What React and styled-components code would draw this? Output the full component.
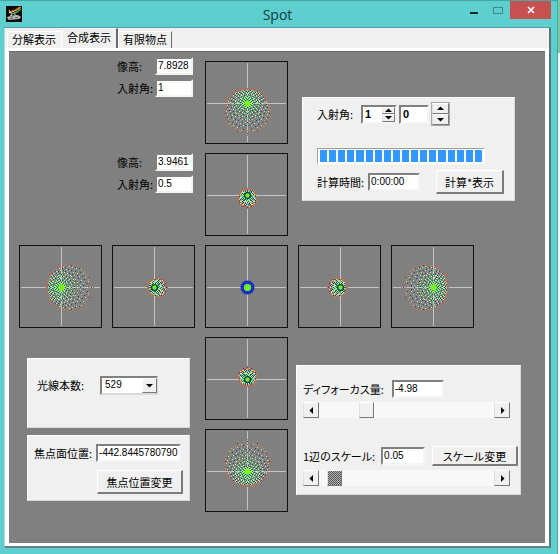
import { useState } from "react";
import styled, { createGlobalStyle } from "styled-components";

const SPOT_SIZE = 83;
const CENTER = 42;
const PUPIL = 13;
const DIRECTIONS = {
  down: (along, across) => [across, along],
  up: (along, across) => [across, -along],
  right: (along, across) => [along, across],
  left: (along, across) => [-along, across],
};
const INNER_COLORS = ["#4cf070", "#2c5c60", "#c8f0a0"];
const OUTER_COLORS = ["#e8d8a8", "#303c88", "#58cc78"];

// square grid of rays over a round pupil, traced through a defocus + coma model
const traceRays = (defocus, coma, direction) => {
  const pixels = new Map();
  const turn = DIRECTIONS[direction];
  const plot = (r, t, scale, color) => {
    const a = defocus * scale * Math.pow(r, 1.5);
    const c = coma * Math.pow(r, 3);
    const along = a * Math.cos(t) + c * (2 + Math.cos(2 * t));
    const across = a * Math.sin(t) + c * Math.sin(2 * t);
    const [x, y] = turn(along, across);
    pixels.set(`${Math.round(x + CENTER)},${Math.round(y + CENTER)}`, color);
  };

  for (let u = -PUPIL; u <= PUPIL; u++) {
    for (let v = -PUPIL; v <= PUPIL; v++) {
      const r = Math.hypot(u, v) / PUPIL;
      if (r > 1) continue;
      const t = Math.atan2(v, u);
      const index = (Math.abs(u) + 2 * Math.abs(v)) % 3;
      plot(r, t, 1, r < 0.72 ? INNER_COLORS[index] : OUTER_COLORS[index]);
      if (r > 0.9) plot(r, t, 1.07, "#d06444");
    }
  }
  return [...pixels].map(([key, color]) => {
    const [x, y] = key.split(",").map(Number);
    return { key, x, y, color };
  });
};

const Spot = ({ kind, direction = "down", col, row }) => {
  const rays =
    kind === "large" ? traceRays(22, 2.8, direction) :
    kind === "small" ? traceRays(9, 1, direction) : [];

  return (
    <SpotBox $col={col} $row={row} viewBox={`0 0 ${SPOT_SIZE} ${SPOT_SIZE}`} aria-hidden="true">
      <rect x="0.5" y="0.5" width="82" height="82" fill="#808080" stroke="#101010" />
      <path d="M2 42.5H81M42.5 2V81" stroke="#c4c4c4" />
      <g shapeRendering="crispEdges">
        {rays.map((p) => (
          <rect key={p.key} x={p.x} y={p.y} width="1" height="1" fill={p.color} />
        ))}
      </g>
      {kind === "large" && <circle cx="42.5" cy="42.5" r="3" fill="#7cf810" />}
      {kind === "small" && <circle cx="42.5" cy="42.5" r="2.9" fill="#74f020" stroke="#0c3454" strokeWidth="1.3" />}
      {kind === "axis" && (
        <>
          <circle cx="42.5" cy="42.5" r="5.2" fill="none" stroke="#1428c8" strokeWidth="3.6" />
          <circle cx="42.5" cy="42.5" r="5.4" fill="none" stroke="#4470a0" strokeWidth="1" strokeDasharray="1 2" />
          <circle cx="42.5" cy="42.5" r="3.6" fill="#70f020" />
        </>
      )}
    </SpotBox>
  );
};

const Arrow = ({ dir }) => {
  const paths = {
    up: "M1 5H8L4.5 1.5Z",
    down: "M1 2H8L4.5 5.5Z",
    left: "M6 0V7L2.5 3.5Z",
    right: "M3 0V7L6.5 3.5Z",
  };
  return (
    <svg width="9" height="7" viewBox="0 0 9 7" aria-hidden="true">
      <path d={paths[dir]} fill="#000" />
    </svg>
  );
};

const AppIcon = () => (
  <svg width="16" height="16" viewBox="0 0 16 16" aria-hidden="true">
    <rect width="16" height="16" fill="#080808" />
    <path d="M3 6.5C7 6 11 4 14.5 1" stroke="#e8e040" strokeWidth="1.5" fill="none" />
    <path d="M5 5C8 5 11 3 13.5 1" stroke="#e04020" strokeWidth="1.2" fill="none" />
    <path d="M6 8C10 7 13 5 15 3" stroke="#40b060" strokeWidth="1.2" fill="none" />
    <path d="M3 4L6 9L4 10L10 10L8 7" stroke="#d0d0d0" fill="none" />
    <path d="M1 12C2 9 6 12 8 10S13 9 15 11L13 13L3 14Z" fill="#b8bcb8" />
    <path d="M4 12.5L7 12M9 12L12 11.5" stroke="#505850" />
  </svg>
);

const ImageFields = ({ row, height, angle }) => (
  <Fields $row={row}>
    <Label htmlFor={`height-${row}`}>像高:</Label>
    <TextBox id={`height-${row}`} $width={38} defaultValue={height} />
    <Label htmlFor={`angle-${row}`}>入射角:</Label>
    <TextBox id={`angle-${row}`} $width={38} defaultValue={angle} />
  </Fields>
);

const ScrollBar = ({ label, value, checked }) => {
  const [position, setPosition] = useState(value);
  return (
    <Scroll>
      <ArrowButton aria-label={`${label} −`} onClick={() => setPosition(Math.max(0, position - 1))}>
        <Arrow dir="left" />
      </ArrowButton>
      <Range
        type="range"
        aria-label={label}
        value={position}
        onChange={(e) => setPosition(Number(e.target.value))}
        $checked={checked}
      />
      <ArrowButton aria-label={`${label} +`} onClick={() => setPosition(Math.min(100, position + 1))}>
        <Arrow dir="right" />
      </ArrowButton>
    </Scroll>
  );
};

const TABS = ["分解表示", "合成表示", "有限物点"];

const App = () => {
  const [tab, setTab] = useState(1);

  return (
    <Desktop>
      <GlobalStyle />
      <Window>
        <TitleBar>
          <AppIcon />
          <Title>Spot</Title>
          <Controls>
            <Control aria-label="最小化">
              <svg width="8" height="12" viewBox="0 0 8 12"><path d="M0 9H8" stroke="#182c30" strokeWidth="2" /></svg>
            </Control>
            <Control aria-label="最大化" disabled>
              <svg width="10" height="12" viewBox="0 0 10 12"><rect x="0.5" y="3.5" width="9" height="6" fill="none" stroke="#3d8c8a" /></svg>
            </Control>
            <Control aria-label="閉じる" $close>
              <svg width="8" height="8" viewBox="0 0 8 8"><path d="M1 1L7 7M7 1L1 7" stroke="#fff" strokeWidth="1.7" /></svg>
            </Control>
          </Controls>
        </TitleBar>
        <Client>
          <TabList role="tablist">
            {TABS.map((name, i) => (
              <Tab key={name} role="tab" aria-selected={tab === i} $active={tab === i} onClick={() => setTab(i)}>
                {name}
              </Tab>
            ))}
          </TabList>
          <Stage role="tabpanel">
            <ImageFields row={1} height="7.8928" angle="1" />
            <ImageFields row={2} height="3.9461" angle="0.5" />

            <Spot kind="large" direction="down" col={3} row={1} />
            <Spot kind="small" direction="down" col={3} row={2} />
            <Spot kind="large" direction="right" col={1} row={3} />
            <Spot kind="small" direction="right" col={2} row={3} />
            <Spot kind="axis" col={3} row={3} />
            <Spot kind="small" direction="left" col={4} row={3} />
            <Spot kind="large" direction="left" col={5} row={3} />
            <Spot kind="small" direction="up" col={3} row={4} />
            <Spot kind="large" direction="up" col={3} row={5} />

            <CalcPanel>
              <Row $gap={2}>
                <WideLabel htmlFor="incidence">入射角:</WideLabel>
                <SpinBox $width={36}>
                  <BoldInput id="incidence" defaultValue="1" />
                  <Spinner>
                    <ArrowButton aria-label="増やす"><Arrow dir="up" /></ArrowButton>
                    <ArrowButton aria-label="減らす"><Arrow dir="down" /></ArrowButton>
                  </Spinner>
                </SpinBox>
                <SpinBox $width={30}>
                  <BoldInput aria-label="入射角 2" defaultValue="0" />
                </SpinBox>
                <Spinner $large>
                  <ArrowButton aria-label="増やす"><Arrow dir="up" /></ArrowButton>
                  <ArrowButton aria-label="減らす"><Arrow dir="down" /></ArrowButton>
                </Spinner>
              </Row>
              <Progress role="progressbar" aria-label="計算" aria-valuenow={100}>
                {Array.from({ length: 18 }, (_, i) => <Chunk key={i} />)}
              </Progress>
              <Row $gap={4} $top={6}>
                <Label htmlFor="time">計算時間:</Label>
                <TextBox id="time" $width={52} defaultValue="0:00:00" />
                <PushButton $width={68}>計算*表示</PushButton>
              </Row>
            </CalcPanel>

            <LeftPanels>
              <RayPanel>
                <Label htmlFor="rays">光線本数:</Label>
                <Combo>
                  <Select id="rays" defaultValue="529">
                    <option>529</option>
                  </Select>
                  <ComboArrow><Arrow dir="down" /></ComboArrow>
                </Combo>
              </RayPanel>
              <FocusPanel>
                <Row $gap={4}>
                  <Label htmlFor="focus">焦点面位置:</Label>
                  <TextBox id="focus" $width={85} defaultValue="-442.8445780790" />
                </Row>
                <PushButton $width={86}>焦点位置変更</PushButton>
              </FocusPanel>
            </LeftPanels>

            <ScalePanel>
              <Row $gap={8}>
                <Label htmlFor="defocus">ディフォーカス量:</Label>
                <TextBox id="defocus" $width={52} defaultValue="-4.98" />
              </Row>
              <ScrollBar label="ディフォーカス量" value={25} />
              <Row $gap={6} $top={28}>
                <Label htmlFor="scale">1辺のスケール:</Label>
                <TextBox id="scale" $width={44} defaultValue="0.05" />
                <PushButton $width={86} $short>スケール変更</PushButton>
              </Row>
              <ScrollBar label="1辺のスケール" value={5} checked />
            </ScalePanel>
          </Stage>
        </Client>
      </Window>
      <Behind />
    </Desktop>
  );
};

export default App;

const GlobalStyle = createGlobalStyle`
* {
  box-sizing: border-box;
}
body {
  margin: 0;
  color: #000;
  font-family: "Noto Sans CJK JP", sans-serif;
  font-size: 11px;
  line-height: 14px;
}
button, input, select {
  margin: 0;
  padding: 0;
  border: 0;
  border-radius: 0;
  font: inherit;
  color: inherit;
}
svg {
  display: block;
}
`;

const Desktop = styled.div`
display: flex;
min-height: 100vh;
`;

const Behind = styled.div`
width: 2px;
background: linear-gradient(#7cc8a0 53px, #f4f8f8 53px);
`;

const Window = styled.div`
flex: 1;
display: flex;
flex-direction: column;
padding: 0 6px 6px 4px;
background: #5ecfce;
border-top: 1px solid #43a5a5;
border-right: 1px solid #48a8a8;
`;

const TitleBar = styled.header`
display: grid;
grid-template-columns: 1fr auto 1fr;
align-items: start;
height: 27px;
border-bottom: 1px solid #48a5a5;

> svg {
  margin: 5px 0 0 2px;
}
`;

const Title = styled.h1`
margin: 4px 0 0;
color: #123c40;
font-family: "Open Sans", sans-serif;
font-size: 14px;
font-weight: 400;
line-height: 20px;
`;

const Controls = styled.div`
display: flex;
justify-content: flex-end;
`;

const Control = styled.button`
display: flex;
align-items: center;
justify-content: center;
width: ${({ $close }) => ($close ? "41px" : "24px")};
height: 18px;
background: ${({ $close }) => ($close ? "#c75050" : "transparent")};
`;

const Client = styled.main`
flex: 1;
display: flex;
flex-direction: column;
background: #f0f0f0;
border-right: 2px solid #5f7475;
border-bottom: 2px solid #5f8585;
border-left: 1px solid #b8dcdc;
`;

const TabList = styled.div`
display: flex;
align-items: flex-end;
height: 20px;
padding-left: 2px;
`;

const Tab = styled.button`
height: ${({ $active }) => ($active ? "20px" : "17px")};
padding: ${({ $active }) => ($active ? "0 5px 4px" : "0 4px 3px")};
background: #f0f0f0;
border-top: 1px solid #fff;
border-left: 1px solid #fff;
border-right: ${({ $active }) => ($active ? "2px" : "1px")} solid #696969;
white-space: nowrap;

&:first-child {
  border-right-color: #f0f0f0;
}
`;

const Stage = styled.section`
flex: 1;
display: grid;
grid-template-columns: repeat(5, 83px) 1fr;
grid-template-rows: 87px repeat(4, 83px);
gap: 9px 10px;
align-items: end;
align-content: start;
padding: 6px 0 30px 10px;
background: #808080;
border: solid #fff;
border-width: 3px 4px 3px 4px;
box-shadow: inset 0 1px #6c6c6c;
`;

const SpotBox = styled.svg`
grid-column: ${({ $col }) => $col};
grid-row: ${({ $row }) => $row};
width: 83px;
height: 83px;
`;

const Fields = styled.div`
grid-column: 1 / 3;
grid-row: ${({ $row }) => $row};
align-self: start;
justify-self: end;
display: grid;
grid-template-columns: auto auto;
gap: 4px 2px;
align-items: center;
margin-right: 2px;
`;

const Label = styled.label`
white-space: nowrap;
font-feature-settings: "palt";
`;

const WideLabel = styled(Label)`
width: 42px;
`;

const TextBox = styled.input`
width: ${({ $width }) => $width}px;
height: 18px;
padding: 0 0 2px 1px;
background: #fff;
border: 2px solid;
border-color: #808080 #f4f4f4 #f4f4f4 #808080;
font-family: "Liberation Sans Narrow", "Liberation Sans", sans-serif;
font-size: 10px;
line-height: 12px;
`;

const Panel = styled.div`
background: #f0f0f0;
border: 1px solid;
border-color: #fff #d8d8d8 #d8d8d8 #fff;
`;

const CalcPanel = styled(Panel)`
grid-column: 4 / 7;
grid-row: 1 / 3;
align-self: start;
margin: 40px 30px 0 4px;
padding: 4px 10px 6px 14px;
`;

const LeftPanels = styled.div`
grid-column: 1 / 3;
grid-row: 4 / 6;
align-self: start;
display: flex;
flex-direction: column;
gap: 7px;
margin: 21px 5px 0 8px;
`;

const RayPanel = styled(Panel)`
display: flex;
gap: 16px;
align-items: center;
height: 70px;
padding: 0 0 16px 9px;
`;

const FocusPanel = styled(Panel)`
display: flex;
flex-direction: column;
gap: 8px;
padding: 8px 6px 6px;
`;

const ScalePanel = styled(Panel)`
grid-column: 3 / 7;
grid-row: 4 / 6;
align-self: start;
justify-self: end;
width: 225px;
margin: 28px 24px 0 0;
padding: 14px 2px 8px 6px;
`;

const Row = styled.div`
display: flex;
align-items: center;
gap: ${({ $gap }) => $gap}px;
margin-top: ${({ $top = 0 }) => $top}px;
`;

const PushButton = styled.button`
width: ${({ $width }) => $width}px;
height: ${({ $short }) => ($short ? "20px" : "24px")};
margin-left: auto;
background: #f0f0f0;
border: solid;
border-width: 1px 2px 2px 1px;
border-color: #fff #7c7c7c #7c7c7c #fff;
white-space: nowrap;
font-feature-settings: "palt";
`;

const ArrowButton = styled.button`
display: flex;
flex: none;
align-items: center;
justify-content: center;
width: 16px;
height: 16px;
background: #f0f0f0;
border: 1px solid;
border-color: #fff #787878 #787878 #e0e0e0;
`;

const SpinBox = styled.div`
display: flex;
width: ${({ $width }) => $width}px;
height: 19px;
background: #fff;
border: 2px solid;
border-color: #808080 #f4f4f4 #f4f4f4 #808080;
`;

const BoldInput = styled.input`
flex: 1;
min-width: 0;
padding-left: 2px;
background: transparent;
font-family: "Liberation Sans", sans-serif;
font-weight: 700;
`;

const Spinner = styled.div`
display: flex;
flex: none;
flex-direction: column;
width: ${({ $large }) => ($large ? "19px" : "13px")};
height: ${({ $large }) => ($large ? "24px" : "15px")};
border: ${({ $large }) => ($large ? "1px solid #a8a8a8" : "none")};

${ArrowButton} {
  flex: 1;
  width: 100%;
  height: auto;
  min-height: 0;
}
`;

const Progress = styled.div`
display: flex;
gap: 2px;
height: 16px;
margin: 22px 19px 0 0;
padding: 1px 2px;
background: #fff;
border: 1px solid;
border-color: #a0a0a0 #fff #fff #a0a0a0;
`;

const Chunk = styled.span`
flex: 1;
background: #3399ff;
`;

const Combo = styled.div`
position: relative;
`;

const Select = styled.select`
appearance: none;
display: block;
width: 58px;
height: 19px;
padding-left: 3px;
background: #fff;
border: 2px solid;
border-color: #808080 #d8d8d8 #d8d8d8 #808080;
font-family: "Liberation Sans Narrow", "Liberation Sans", sans-serif;
font-size: 10px;
`;

const ComboArrow = styled.span`
position: absolute;
top: 2px;
right: 1px;
display: flex;
align-items: center;
justify-content: center;
width: 15px;
height: 15px;
background: #f0f0f0;
border: 1px solid;
border-color: #fff #787878 #787878 #fff;
pointer-events: none;
`;

const Scroll = styled.div`
display: flex;
margin: 4px 8px 0 0;
`;

const Range = styled.input`
appearance: none;
flex: 1;
min-width: 0;
height: 16px;
background: #f8f8f8;

&::-webkit-slider-thumb {
  appearance: none;
  width: 15px;
  height: 16px;
  background: ${({ $checked }) =>
    $checked ? "repeating-conic-gradient(#585858 0 25%, #b0b0b0 0 50%) 0 0 / 2px 2px" : "#f0f0f0"};
  border: 1px solid;
  border-color: #fff #787878 #787878 #e0e0e0;
}
`;
